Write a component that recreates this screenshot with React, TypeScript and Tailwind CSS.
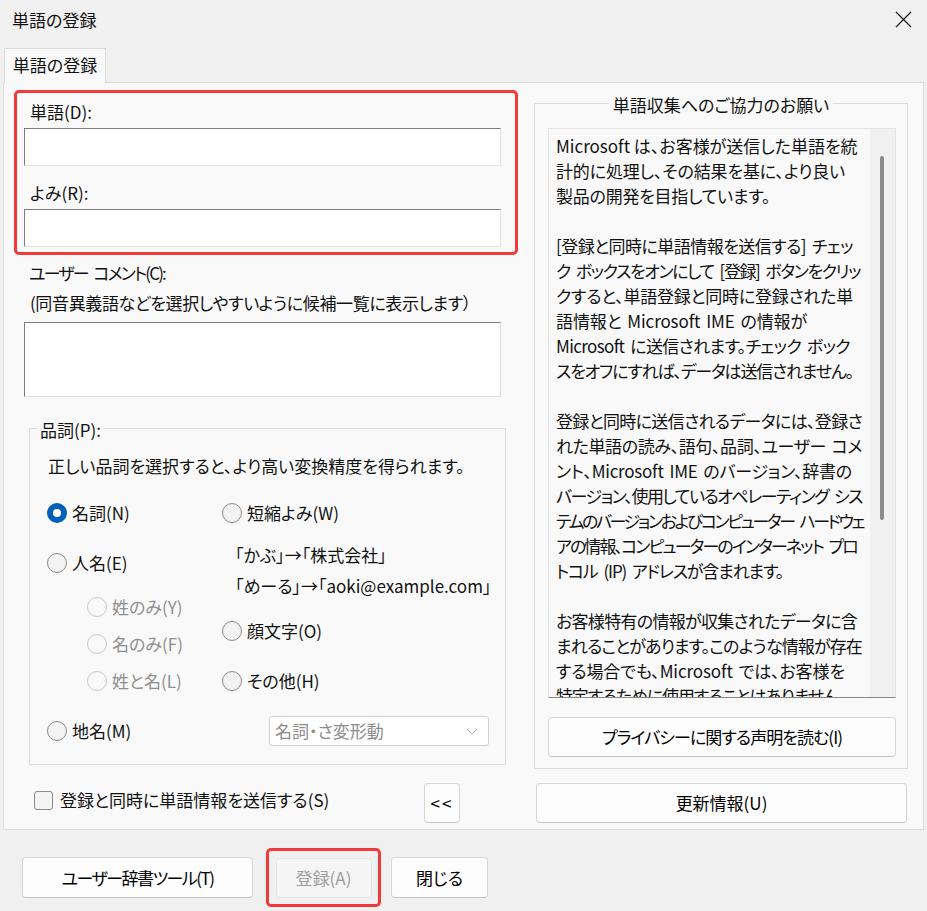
import clsx from "clsx";
import { useLayoutEffect, useRef, useState } from "react";
import type { ReactNode } from "react";

// 単語収集の説明文：行の文字列と、その行が占める幅(px)
const notice: [string, number][] = [
  ["Microsoft は、お客様が送信した単語を統", 304],
  ["計的に処理し、その結果を基に、より良い", 289],
  ["製品の開発を目指しています。", 214],
  ["", 0],
  ["[登録と同時に単語情報を送信する] チェッ", 297],
  ["ク ボックスをオンにして [登録] ボタンをクリッ", 304],
  ["クすると、単語登録と同時に登録された単", 297],
  ["語情報と Microsoft IME の情報が", 251],
  ["Microsoft に送信されます。チェック ボック", 294],
  ["スをオフにすれば、データは送信されません。", 297],
  ["", 0],
  ["登録と同時に送信されるデータには、登録さ", 306],
  ["れた単語の読み、語句、品詞、ユーザー コメ", 306],
  ["ント、Microsoft IME のバージョン、辞書の", 296],
  ["バージョン、使用しているオペレーティング シス", 306],
  ["テムのバージョンおよびコンピューター ハードウェ", 307],
  ["アの情報、コンピューターのインターネット プロ", 301],
  ["トコル (IP) アドレスが含まれます。", 227],
  ["", 0],
  ["お客様特有の情報が収集されたデータに含", 301],
  ["まれることがあります。このような情報が存在", 306],
  ["する場合でも、Microsoft では、お客様を", 289],
  ["特定するために使用することはありません。", 289],
];

const SPACE_EXTRA = 2;

// 指定幅に収まるよう字間を詰める。空白は詰めずに少し広げる
const FitText = ({ text, width, className }: { text: string; width: number; className?: string }) => {
  const ref = useRef<HTMLSpanElement>(null);
  const [spacing, setSpacing] = useState(0);

  useLayoutEffect(() => {
    const el = ref.current;
    if (!el || !text) return;
    const n = [...text].length;
    const spaces = text.split(" ").length - 1;
    const measure = () => {
      const style = getComputedStyle(el);
      const ls = parseFloat(style.letterSpacing) || 0;
      const ws = parseFloat(style.wordSpacing) || 0;
      const natural = el.getBoundingClientRect().width - ls * n - ws * spaces;
      const next = (width - natural - SPACE_EXTRA * spaces) / Math.max(1, n - spaces);
      setSpacing(Math.min(0, next));
    };
    measure();
    document.fonts?.ready.then(measure);
  }, [text, width]);

  return (
    <span
      ref={ref}
      style={{ letterSpacing: spacing, wordSpacing: spacing < 0 ? SPACE_EXTRA - spacing : 0 }}
      className={clsx("inline-block whitespace-nowrap", className)}
    >
      {text}
    </span>
  );
};

const Radio = ({ checked, disabled }: { checked?: boolean; disabled?: boolean }) =>
  checked ? (
    <span className="flex h-5 w-5 shrink-0 items-center justify-center rounded-full bg-[#005fb8]">
      <span className="h-2 w-2 rounded-full bg-white" />
    </span>
  ) : (
    <span
      className={clsx(
        "h-5 w-5 shrink-0 rounded-full border",
        disabled ? "border-[#c9c9c9] bg-[#f9f9f9]" : "border-[#8a8a8a] bg-[#f3f3f3]"
      )}
    />
  );

const RadioItem = ({
  label,
  checked,
  disabled,
  className,
}: {
  label: string;
  checked?: boolean;
  disabled?: boolean;
  className?: string;
}) => (
  <div className={clsx("flex h-[22px] items-center gap-[5px]", className)}>
    <Radio checked={checked} disabled={disabled} />
    <span className={clsx("whitespace-nowrap", disabled && "text-[#8f8f8f]")}>{label}</span>
  </div>
);

const TextBox = ({ className }: { className?: string }) => (
  <div
    className={clsx(
      "w-[477px] border border-[#e2e2e2] border-l-[#7c7c7c] border-t-[#7c7c7c] bg-white",
      className
    )}
  />
);

const Button = ({
  children,
  disabled,
  className,
}: {
  children: ReactNode;
  disabled?: boolean;
  className?: string;
}) => (
  <button
    type="button"
    className={clsx(
      "flex items-center justify-center rounded-[4px] border whitespace-nowrap",
      disabled
        ? "border-[#e6e6e6] bg-[#f5f5f5] text-[#9d9d9d]"
        : "border-[#d6d6d6] border-b-[#c3c3c3] bg-[#fdfdfd] text-black",
      className
    )}
  >
    {children}
  </button>
);

export default function App() {
  return (
    <div className="h-[911px] w-[927px] overflow-hidden bg-[#f0f0f0] font-['Noto_Sans_CJK_JP',sans-serif] text-[17px] leading-[22px] text-[#111] [font-feature-settings:'palt']">
      {/* タイトルバー */}
      <div className="flex h-[43px] items-start justify-between pl-[12px] pr-[15px] pt-[9px]">
        <span>単語の登録</span>
        <svg width="17" height="17" viewBox="0 0 17 17" className="mt-[2px]">
          <path d="M1 1 L16 16 M16 1 L1 16" stroke="#1a1a1a" strokeWidth="1.2" />
        </svg>
      </div>

      {/* タブ */}
      <div className="flex h-[39px] items-end pl-[4px]">
        <div className="relative z-10 -mb-px flex h-[35px] w-[102px] items-center justify-center border border-b-0 border-[#dcdcdc] bg-[#f9f9f9] pb-[2px]">
          単語の登録
        </div>
      </div>

      {/* タブの中身 */}
      <div className="mx-[3px] flex h-[748px] border border-[#dcdcdc] bg-[#f9f9f9]">
        {/* 左側 */}
        <div className="flex w-[530px] shrink-0 flex-col">
          <div className="ml-[10px] mt-[7px] flex h-[165px] w-[504px] flex-col rounded-[5px] border-[3px] border-[#f23a3a]">
            <span className="ml-[13px] mt-[8px]">単語(D):</span>
            <TextBox className="ml-[7px] mt-[5px] h-[38px]" />
            <span className="ml-[13px] mt-[16px]">よみ(R):</span>
            <TextBox className="ml-[7px] mt-[5px] h-[38px]" />
          </div>

          <div className="ml-[25px] mt-[7px] h-[22px]">
            <FitText text="ユーザー コメント(C):" width={136} />
          </div>
          <div className="ml-[26px] mt-[8px] h-[22px]">
            <FitText text="(同音異義語などを選択しやすいように候補一覧に表示します）" width={441} />
          </div>
          <TextBox className="ml-[20px] mt-[8px] h-[75px]" />

          {/* 品詞 */}
          <div className="relative ml-[25px] mt-[31px] h-[337px] w-[477px] shrink-0 border border-[#dcdcdc]">
            <span className="absolute -top-[10px] left-[8px] bg-[#f9f9f9] px-[2px]">品詞(P):</span>
            <div className="ml-[18px] mt-[26px] whitespace-nowrap">
              正しい品詞を選択すると、より高い変換精度を得られます。
            </div>
            <div className="flex pl-[17px]">
              <div className="flex w-[175px] flex-col">
                <RadioItem label="名詞(N)" checked className="mt-[25px]" />
                <RadioItem label="人名(E)" className="mt-[28px]" />
                <RadioItem label="姓のみ(Y)" disabled className="ml-[40px] mt-[22px]" />
                <RadioItem label="名のみ(F)" disabled className="ml-[40px] mt-[15px]" />
                <RadioItem label="姓と名(L)" disabled className="ml-[40px] mt-[15px]" />
                <RadioItem label="地名(M)" className="mt-[28px]" />
              </div>
              <div className="flex flex-col">
                <RadioItem label="短縮よみ(W)" className="mt-[25px]" />
                <span className="ml-[13px] mt-[20px] whitespace-nowrap">「かぶ」→「株式会社」</span>
                <span className="ml-[13px] mt-[9px] whitespace-nowrap">「めーる」→「aoki@example.com」</span>
                <RadioItem label="顔文字(O)" className="mt-[23px]" />
                <RadioItem label="その他(H)" className="mt-[28px]" />
                <div className="ml-[47px] mt-[24px] flex h-[30px] w-[220px] items-center justify-between rounded-[3px] border border-[#d0d0d0] bg-white pl-[5px] pr-[10px] text-[#8c8c8c]">
                  <span>名詞・さ変形動</span>
                  <svg width="12" height="7" viewBox="0 0 12 7">
                    <path d="M1 1 L6 6 L11 1" fill="none" stroke="#b8b8b8" strokeWidth="1" />
                  </svg>
                </div>
              </div>
            </div>
          </div>

          <div className="ml-[30px] mt-[18px] flex w-[426px] items-start justify-between">
            <div className="mt-[6px] flex h-[22px] items-center gap-[7px]">
              <span className="h-[19px] w-[19px] rounded-[3px] border border-[#8a8a8a] bg-[#f3f3f3]" />
              <span className="whitespace-nowrap">登録と同時に単語情報を送信する(S)</span>
            </div>
            <Button className="h-[40px] w-[36px] tracking-[2px]">&lt;&lt;</Button>
          </div>
        </div>

        {/* 右側 */}
        <div className="flex flex-col">
          <div className="relative mt-[20px] flex h-[666px] w-[374px] flex-col border border-[#dcdcdc]">
            <span className="absolute -top-[10px] left-1/2 -translate-x-1/2 whitespace-nowrap bg-[#f9f9f9] px-[4px]">
              単語収集へのご協力のお願い
            </span>
            <div className="ml-[13px] mt-[24px] flex h-[570px] w-[348px] border border-[#e3e3e3] border-b-[#878787] bg-[#f9f9f9]">
              <div className="flex-1 overflow-hidden pl-[7px] pt-[4px] leading-[25px]">
                {notice.map(([line, width], i) => (
                  <div key={i} className="h-[25px]">
                    {line && <FitText text={line} width={width} />}
                  </div>
                ))}
              </div>
              <div className="w-[25px] shrink-0 bg-[#f0f0f0] pl-[10px] pt-[27px]">
                <div className="h-[364px] w-[4px] rounded-full bg-[#8a8a8a]" />
              </div>
            </div>
            <Button className="ml-[13px] mt-[19px] h-[40px] w-[348px]">
              <FitText text="プライバシーに関する声明を読む(I)" width={240} />
            </Button>
          </div>
          <Button className="ml-[2px] mt-[14px] h-[40px] w-[371px]">更新情報(U)</Button>
        </div>
      </div>

      {/* 下部ボタン */}
      <div className="mt-[18px] flex h-[59px] items-center pl-[22px]">
        <Button className="h-[41px] w-[231px]">
          <FitText text="ユーザー辞書ツール(T)" width={152} />
        </Button>
        <div className="ml-[13px] flex h-[59px] w-[115px] items-center justify-center rounded-[5px] border-[3px] border-[#f23a3a]">
          <Button disabled className="h-[40px] w-[96px]">
            登録(A)
          </Button>
        </div>
        <Button className="ml-[10px] h-[41px] w-[97px]">閉じる</Button>
      </div>
    </div>
  );
}
